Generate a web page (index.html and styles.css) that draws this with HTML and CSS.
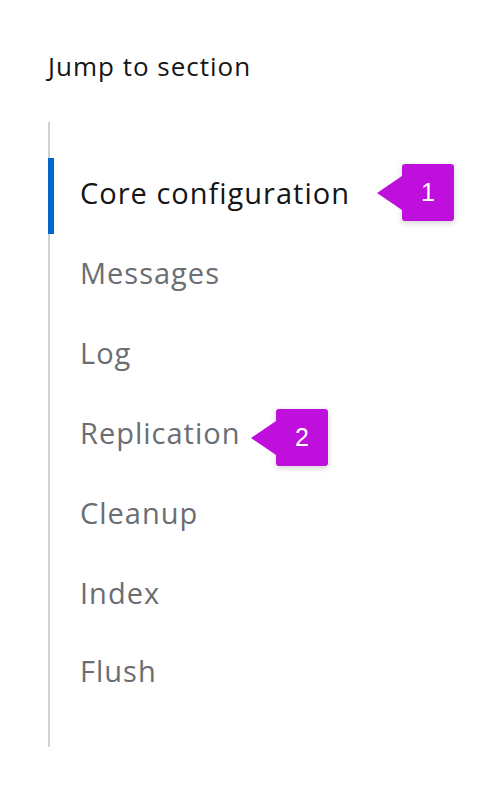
FILE: index.html
```html
<!DOCTYPE html>
<html>
<head>
<meta charset="utf-8">
<link rel="stylesheet" href="styles.css">
</head>
<body>
<div class="page">
  <div class="label">Jump to section</div>
  <ul class="links">
    <li class="item active"><span class="text">Core configuration</span></li>
    <li class="item"><span class="text">Messages</span></li>
    <li class="item"><span class="text">Log</span></li>
    <li class="item"><span class="text">Replication</span></li>
    <li class="item"><span class="text">Cleanup</span></li>
    <li class="item"><span class="text">Index</span></li>
    <li class="item last"><span class="text">Flush</span></li>
  </ul>
  <div class="callout c1"><span class="num">1</span></div>
  <div class="callout c2"><span class="num">2</span></div>
</div>
</body>
</html>
```
FILE: styles.css
```css
html, body {
  margin: 0;
  padding: 0;
  background: #fff;
}
.page {
  position: relative;
  width: 498px;
  height: 792px;
  padding: 49px 0 0 48px;
  box-sizing: border-box;
  font-family: "Open Sans", "Liberation Sans", sans-serif;
}
.label {
  font-size: 26px;
  letter-spacing: 1px;
  line-height: 34px;
  color: #151515;
}
.links {
  list-style: none;
  margin: 39px 0 0 0;
  padding: 36px 0 33px 0;
  border-left: 2px solid #d2d2d2;
  display: flex;
  flex-direction: column;
  gap: 4px;
}
.item {
  position: relative;
  height: 76px;
  display: flex;
  align-items: center;
  padding-left: 30px;
  font-size: 29px;
  letter-spacing: 1px;
  color: #6a6e73;
}
.item.active {
  color: #151515;
}
.item.active::before {
  content: "";
  position: absolute;
  left: -2px;
  top: 0;
  bottom: 0;
  width: 6px;
  background: #06c;
}
.text {
  position: relative;
  top: -4px;
}
.item.last .text {
  top: -6px;
}
.callout {
  position: absolute;
  width: 52px;
  height: 57px;
  background: #be0fdc;
  border-radius: 3px;
  display: flex;
  align-items: center;
  justify-content: center;
  box-shadow: 0 2px 6px rgba(0,0,0,0.18);
}
.callout::before {
  content: "";
  position: absolute;
  left: -25px;
  top: 50%;
  margin-top: -17px;
  border-style: solid;
  border-width: 17px 25px 17px 0;
  border-color: transparent #be0fdc transparent transparent;
}
.c1 { left: 402px; top: 164px; }
.c2 { left: 276px; top: 409px; }
.num {
  color: #fff;
  font-family: "Liberation Sans", Arial, sans-serif;
  font-size: 25px;
}
```
